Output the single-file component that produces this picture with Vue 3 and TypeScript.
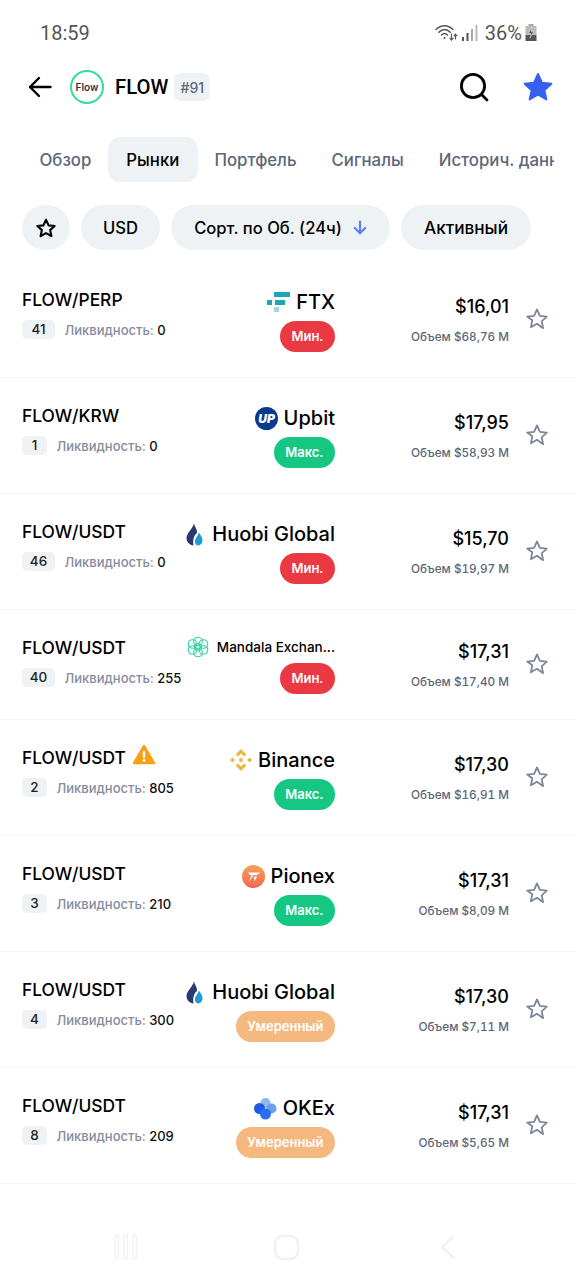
<script setup lang="ts">
interface Market {
  pair: string
  rank: number
  liquidity: number
  exchange: string
  logo: string
  badge: 'min' | 'max' | 'mid'
  price: string
  volume: string
  warn?: boolean
  small?: boolean
}

const badgeLabels: Record<string, string> = { min: 'Мин.', max: 'Макс.', mid: 'Умеренный' }

const tabs = ['Обзор', 'Рынки', 'Портфель', 'Сигналы', 'Историч. данные']

const markets: Market[] = [
  { pair: 'FLOW/PERP', rank: 41, liquidity: 0, exchange: 'FTX', logo: 'ftx', badge: 'min', price: '$16,01', volume: 'Объем $68,76 M' },
  { pair: 'FLOW/KRW', rank: 1, liquidity: 0, exchange: 'Upbit', logo: 'upbit', badge: 'max', price: '$17,95', volume: 'Объем $58,93 M' },
  { pair: 'FLOW/USDT', rank: 46, liquidity: 0, exchange: 'Huobi Global', logo: 'huobi', badge: 'min', price: '$15,70', volume: 'Объем $19,97 M' },
  { pair: 'FLOW/USDT', rank: 40, liquidity: 255, exchange: 'Mandala Exchan...', logo: 'mandala', badge: 'min', price: '$17,31', volume: 'Объем $17,40 M', small: true },
  { pair: 'FLOW/USDT', rank: 2, liquidity: 805, exchange: 'Binance', logo: 'binance', badge: 'max', price: '$17,30', volume: 'Объем $16,91 M', warn: true },
  { pair: 'FLOW/USDT', rank: 3, liquidity: 210, exchange: 'Pionex', logo: 'pionex', badge: 'max', price: '$17,31', volume: 'Объем $8,09 M' },
  { pair: 'FLOW/USDT', rank: 4, liquidity: 300, exchange: 'Huobi Global', logo: 'huobi', badge: 'mid', price: '$17,30', volume: 'Объем $7,11 M' },
  { pair: 'FLOW/USDT', rank: 8, liquidity: 209, exchange: 'OKEx', logo: 'okex', badge: 'mid', price: '$17,31', volume: 'Объем $5,65 M' },
]
</script>

<template>
  <div class="page">
    <div class="status">
      <span class="time">18:59</span>
      <div class="status-right">
        <svg class="wifi" width="23" height="20" viewBox="0 0 23 20" fill="none" stroke="#555" stroke-width="1.5" stroke-linecap="round">
          <path d="M1 6.5C6 1.5 13 1.5 18 6.5" />
          <path d="M3.8 9.3C7.5 5.6 11.5 5.6 15.2 9.3" />
          <path d="M6.6 12C8.6 10 10.4 10 12.4 12" />
          <circle cx="9.5" cy="15" r="1" fill="#555" stroke="none" />
          <path d="M16.5 11v6M14.8 15.2l1.7 2 1.7-2M20.5 16v-5M19 12.8l1.5-1.8 1.5 1.8" stroke-width="1.1" />
        </svg>
        <svg class="signal" width="16" height="18" viewBox="0 0 16 18">
          <rect x="0" y="13" width="2" height="4" fill="#555" />
          <rect x="4.5" y="9" width="2" height="8" fill="#555" />
          <rect x="9" y="5" width="2" height="12" fill="#aaa" />
          <rect x="13.5" y="1" width="2" height="16" fill="#bbb" />
        </svg>
        <span class="pct">36%</span>
        <svg class="batt" width="12" height="18" viewBox="0 0 12 18">
          <rect x="3.5" y="0" width="5" height="2" fill="#aaa" />
          <rect x="0.5" y="2" width="11" height="9" fill="#bbb" />
          <rect x="0.5" y="11" width="11" height="6" fill="#555" />
          <path d="M7 3L3.5 9.5H6L5 14L8.6 7.5H6.2Z" fill="#555" stroke="#fff" stroke-width="0.4" />
        </svg>
      </div>
    </div>

    <header class="header">
      <svg class="back" width="24" height="22" viewBox="0 0 24 22" fill="none" stroke="#000" stroke-width="2.4" stroke-linecap="round" stroke-linejoin="round">
        <path d="M22.5 11H2M11 2L2 11L11 20" />
      </svg>
      <div class="coin"><span>Flow</span></div>
      <span class="coin-name">FLOW</span>
      <span class="coin-rank">#91</span>
      <div class="header-actions">
        <svg width="30" height="30" viewBox="0 0 30 30" fill="none" stroke="#000" stroke-width="2.8" stroke-linecap="round">
          <circle cx="14" cy="14" r="11.6" />
          <path d="M23 23L28 28" />
        </svg>
        <svg width="32" height="32" viewBox="0 0 24 24" fill="#3560f0" stroke="#3560f0" stroke-width="1.4" stroke-linejoin="round">
          <path d="M12 2.2l3 6.6 7.1.8-5.3 4.8 1.5 7-6.3-3.6-6.3 3.6 1.5-7L1.9 9.6 9 8.8z" />
        </svg>
      </div>
    </header>

    <nav class="tabs">
      <span v-for="t in tabs" :key="t" class="tab" :class="{ active: t === 'Рынки' }">{{ t }}</span>
    </nav>

    <div class="filters">
      <span class="chip chip-star">
        <svg width="22" height="22" viewBox="0 0 24 24" fill="none" stroke="#000" stroke-width="2.3" stroke-linejoin="round">
          <path d="M12 3l2.8 6.1 6.6.7-4.9 4.5 1.4 6.6-5.9-3.4-5.9 3.4 1.4-6.6-4.9-4.5 6.6-.7z" />
        </svg>
      </span>
      <span class="chip chip-usd">USD</span>
      <span class="chip chip-sort">
        Сорт. по Об. (24ч)
        <svg width="14" height="15" viewBox="0 0 14 15" fill="none" stroke="#5a82ee" stroke-width="2.2" stroke-linecap="round" stroke-linejoin="round">
          <path d="M7 1.5V13M1.8 8L7 13.2L12.2 8" />
        </svg>
      </span>
      <span class="chip chip-active">Активный</span>
    </div>

    <section class="list">
      <article v-for="(m, i) in markets" :key="i" class="row" :class="{ compact: m.small }">
        <div class="left">
          <div class="pair">
            {{ m.pair }}
            <svg v-if="m.warn" class="warn" width="24" height="22" viewBox="0 0 24 22">
              <path d="M12 3L22 20H2Z" fill="#f9a015" stroke="#f9a015" stroke-width="2.4" stroke-linejoin="round" />
              <rect x="10.8" y="8" width="2.4" height="7" rx="1" fill="#fff" />
              <circle cx="12" cy="17.4" r="1.4" fill="#fff" />
            </svg>
          </div>
          <div class="meta">
            <span class="rank" :class="{ wide: m.rank > 9 }">{{ m.rank }}</span>
            <span class="liq">Ликвидность: <b>{{ m.liquidity }}</b></span>
          </div>
        </div>

        <div class="exch">
          <div class="exch-line" :class="{ small: m.small }">
            <svg v-if="m.logo === 'ftx'" class="logo" width="23" height="20" viewBox="0 0 23 20" fill="#1fa5bb">
              <rect x="7" y="0" width="16" height="5" />
              <rect x="0" y="8" width="5" height="5" />
              <rect x="8" y="8" width="10" height="5" />
              <rect x="7" y="15" width="5" height="5" fill="#9fd8e0" />
            </svg>
            <svg v-else-if="m.logo === 'upbit'" class="logo" width="23" height="23" viewBox="0 0 23 23">
              <circle cx="11.5" cy="11.5" r="11.5" fill="#0a3a8c" />
              <text x="11.5" y="15.6" text-anchor="middle" class="up">UP</text>
            </svg>
            <svg v-else-if="m.logo === 'huobi'" class="logo" width="20" height="23" viewBox="0 0 20 23">
              <path d="M8 0C8.500 4 11.500 6 11 10C8.500 12 6.500 15.500 7.500 22.500C3.500 22 0.500 19 0.500 15C0.500 9.500 7 6 8 0Z" fill="#2b3a6e" />
              <path d="M13 9.500C14 12 16.500 14 16.500 17.300C16.500 20.300 14.500 22.500 12 22.500C10 22.500 9 20.500 9 18.300C9 14.800 12 13 13 9.500Z" fill="#1f9ad6" />
            </svg>
            <svg v-else-if="m.logo === 'mandala'" class="logo" width="22" height="22" viewBox="0 0 22 22" fill="none" stroke="#2fd0a4" stroke-width="1.1">
              <circle cx="11" cy="11" r="3.4" />
              <circle cx="11" cy="5.500" r="4.300" />
              <circle cx="11" cy="16.500" r="4.300" />
              <circle cx="5.500" cy="8" r="4.300" />
              <circle cx="16.500" cy="8" r="4.300" />
              <circle cx="5.500" cy="14" r="4.300" />
              <circle cx="16.500" cy="14" r="4.300" />
            </svg>
            <svg v-else-if="m.logo === 'binance'" class="logo" width="22" height="22" viewBox="0 0 22 22" fill="#eab93a">
              <path d="M11 0L16.200 5.200L14 7.400L11 4.400L8 7.400L5.800 5.200Z" />
              <path d="M11 22L5.800 16.800L8 14.600L11 17.600L14 14.600L16.200 16.800Z" />
              <path d="M0 11L2.400 8.600L4.800 11L2.400 13.400Z" />
              <path d="M17.200 11L19.600 8.600L22 11L19.600 13.400Z" />
              <path d="M11 8.500L13.500 11L11 13.500L8.500 11Z" />
            </svg>
            <svg v-else-if="m.logo === 'pionex'" class="logo" width="23" height="23" viewBox="0 0 23 23">
              <defs>
                <linearGradient id="pio" x1="0" y1="0" x2="0" y2="1">
                  <stop offset="0" stop-color="#f8a05e" />
                  <stop offset="1" stop-color="#ee6a4e" />
                </linearGradient>
              </defs>
              <circle cx="11.500" cy="11.500" r="11.500" fill="url(#pio)" />
              <path d="M6 7.500H18.500L15 10H11.500L7 17L9.500 10H8Z" fill="#fff" />
              <path d="M12 11.500H15L12.500 16.500Z" fill="#fff" />
            </svg>
            <svg v-else-if="m.logo === 'okex'" class="logo" width="23" height="23" viewBox="0 0 23 23">
              <circle cx="11.500" cy="6" r="5" fill="#8db8ee" />
              <circle cx="17.500" cy="11.500" r="5" fill="#6a9eea" />
              <circle cx="5.500" cy="11.500" r="5.500" fill="#1f5ce0" />
              <circle cx="11.500" cy="17" r="5.500" fill="#2a6ef0" />
            </svg>
            <span class="exch-name">{{ m.exchange }}</span>
          </div>
          <span class="badge" :class="m.badge">{{ badgeLabels[m.badge] }}</span>
        </div>

        <div class="price">
          <span class="amount">{{ m.price }}</span>
          <span class="volume">{{ m.volume }}</span>
        </div>

        <svg class="star" width="24" height="24" viewBox="0 0 24 24" fill="none" stroke="#7e879a" stroke-width="1.800" stroke-linejoin="round">
          <path d="M12 2.500l2.900 6.300 6.900.8-5.100 4.700 1.400 6.900L12 16.800l-6.100 3.400 1.400-6.900L2.200 9.600l6.900-.8z" />
        </svg>
      </article>
    </section>

    <div class="navbar">
      <svg width="24" height="26" viewBox="0 0 24 26" fill="none" stroke="#f0f1f3" stroke-width="1.400">
        <rect x="1" y="1" width="3.500" height="24" rx="1.700" />
        <rect x="10" y="1" width="3.500" height="24" rx="1.700" />
        <rect x="19" y="1" width="3.500" height="24" rx="1.700" />
      </svg>
      <svg width="27" height="27" viewBox="0 0 27 27" fill="none" stroke="#f0f1f3" stroke-width="2.500">
        <rect x="2" y="2" width="23" height="23" rx="8" />
      </svg>
      <svg width="16" height="26" viewBox="0 0 16 26" fill="none" stroke="#f0f1f3" stroke-width="2.500" stroke-linejoin="round">
        <path d="M14 2L2 13L14 24" />
      </svg>
    </div>
  </div>
</template>

<style>
html, body { margin: 0; background: #fff; }
</style>

<style scoped>
.page {
  position: relative;
  width: 576px;
  height: 1280px;
  overflow: hidden;
  background: #fff;
  font-family: Inter, "Liberation Sans", sans-serif;
  color: #000;
  display: flex;
  flex-direction: column;
}
.status {
  height: 66px;
  box-sizing: border-box;
  padding: 20px 39px 0 40px;
  display: flex;
  justify-content: space-between;
  align-items: flex-start;
  color: #555;
  font-family: Roboto, sans-serif;
  font-size: 20px;
  line-height: 26px;
}
.status-right { display: flex; align-items: center; }
.wifi { margin-right: 4px; }
.signal { margin-right: 7px; }
.pct { margin-right: 3px; }
.header {
  height: 42px;
  display: flex;
  align-items: center;
  padding: 0 22px 0 28px;
}
.back { margin-right: 18px; }
.coin {
  width: 34px;
  height: 34px;
  box-sizing: border-box;
  border: 2px solid #35dc9c;
  border-radius: 50%;
  display: flex;
  align-items: center;
  justify-content: center;
  margin-right: 11px;
  font-size: 10px;
  font-weight: 600;
  color: #333;
}
.coin-name {
  font-family: Roboto, sans-serif;
  font-size: 20.300px;
  font-weight: 500;
  margin-right: 6px;
}
.coin-rank {
  width: 36px;
  height: 28px;
  border-radius: 7px;
  background: #eff2f5;
  color: #5d667a;
  font-size: 14px;
  font-weight: 500;
  display: flex;
  align-items: center;
  justify-content: center;
}
.header-actions {
  margin-left: auto;
  display: flex;
  align-items: center;
  gap: 33px;
}
.tabs {
  margin: 29px 22px 0;
  height: 45px;
  display: flex;
  overflow: hidden;
  white-space: nowrap;
}
.tab {
  padding: 0 17.500px;
  line-height: 47px;
  font-size: 16.800px;
  font-weight: 500;
  color: #5d667a;
  border-radius: 12px;
  flex: none;
}
.tab.active {
  background: #eff2f5;
  color: #000;
  padding: 0 18.500px;
  margin: 0 -1px;
}
.filters {
  margin: 23px 22px 0;
  display: flex;
  gap: 11px;
}
.chip {
  height: 45px;
  box-sizing: border-box;
  border-radius: 23px;
  background: #eff2f5;
  display: flex;
  align-items: center;
  justify-content: center;
  font-size: 16.600px;
  font-weight: 500;
  flex: none;
}
.chip-star { width: 48px; }
.chip-usd { width: 79px; }
.chip-sort { width: 219px; gap: 11px; }
.chip-active { width: 130px; font-size: 17.200px; }
.list { margin-top: 12px; }
.row {
  height: 116px;
  box-sizing: border-box;
  padding: 0 27px 0 22px;
  display: flex;
  align-items: center;
  border-bottom: 1px solid #f2f3f5;
}
.row.compact { height: 110px; }
.left {
  align-self: flex-start;
  flex: 1;
  padding-top: 25px;
  min-width: 0;
}
.pair {
  height: 24px;
  display: flex;
  align-items: center;
  gap: 6px;
  font-size: 17.400px;
  font-weight: 500;
  white-space: nowrap;
}
.warn { flex: none; margin-top: -6px; }
.meta {
  margin-top: 9px;
  display: flex;
  align-items: center;
  gap: 9.500px;
  white-space: nowrap;
}
.rank {
  width: 25px;
  height: 19px;
  border-radius: 5px;
  background: #eff2f5;
  font-size: 13.500px;
  font-weight: 500;
  line-height: 19px;
  text-align: center;
  color: #222;
  flex: none;
}
.rank.wide { width: 33px; }
.liq { font-size: 13px; font-weight: 500; color: #858c9c; white-space: nowrap; }
.liq b { font-weight: 500; color: #111; }
.exch {
  width: 190px;
  flex: none;
  display: flex;
  flex-direction: column;
  align-items: flex-end;
  gap: 5px;
  margin-top: 1px;
}
.exch-line {
  display: flex;
  align-items: center;
  justify-content: flex-end;
  height: 27px;
  width: 100%;
}
.exch-line.small { height: 21px; }
.logo { flex: none; margin-right: 6px; }
.exch-name { font-size: 20px; font-weight: 500; white-space: nowrap; }
.small .exch-name { font-size: 13.500px; margin-left: 2px; }
.up { font-size: 12px; font-weight: 900; font-style: italic; fill: #fff; font-family: Inter, sans-serif; }
.badge {
  height: 31px;
  padding: 0 11.500px;
  border-radius: 16px;
  font-size: 13px;
  font-weight: 600;
  line-height: 31px;
  color: #fff;
}
.badge.min { background: #ea3943; }
.badge.max { background: #16c784; }
.badge.mid { background: #f5b97f; }
.price {
  width: 174px;
  flex: none;
  display: flex;
  flex-direction: column;
  align-items: flex-end;
  gap: 10.500px;
  margin-top: 4.500px;
}
.amount { font-size: 18px; font-weight: 500; line-height: 20px; }
.volume {
  font-size: 11.750px;
  font-weight: 500;
  color: #5d667a;
  line-height: 20px;
  font-variant-numeric: tabular-nums;
}
.star { flex: none; margin-left: 16px; margin-top: -2px; }
.navbar {
  position: absolute;
  top: 1234px;
  left: 0;
  width: 576px;
  height: 27px;
}
.navbar svg { position: absolute; top: 0; }
.navbar svg:nth-child(1) { left: 114px; }
.navbar svg:nth-child(2) { left: 273px; }
.navbar svg:nth-child(3) { left: 440px; }
</style>
